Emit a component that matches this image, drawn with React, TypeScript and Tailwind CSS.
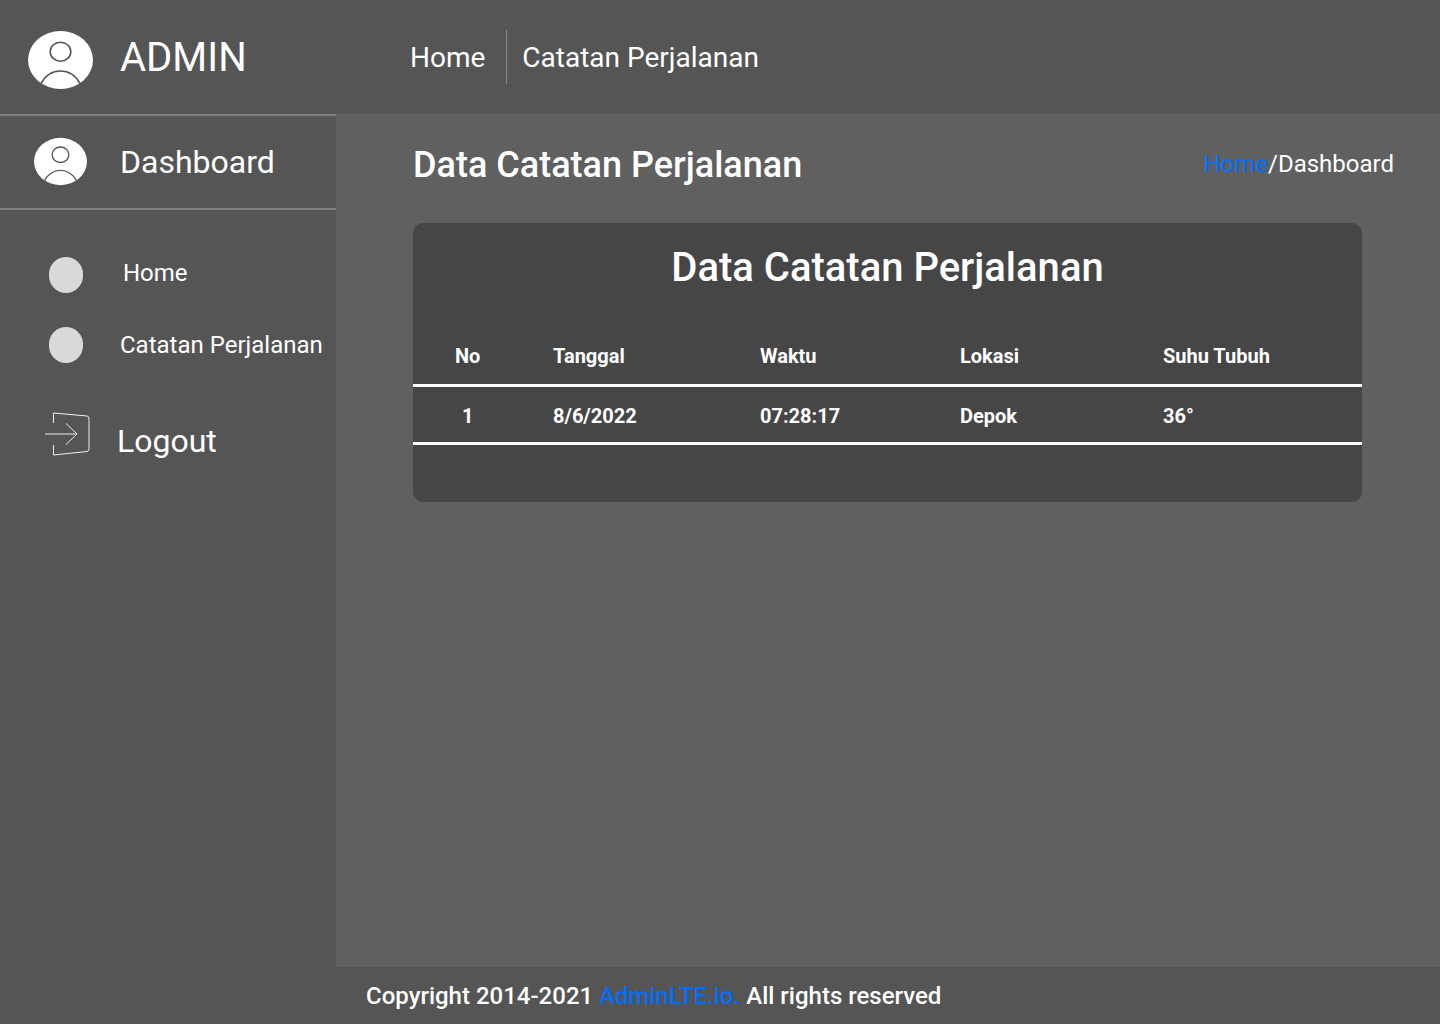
import { ReactNode } from 'react'

function Avatar({ className }: { className: string }) {
  return (
    <svg viewBox="0 0 65 58" className={className}>
      <ellipse cx="32.5" cy="29" rx="32.5" ry="29" fill="#fff" />
      <ellipse cx="32.5" cy="20.7" rx="10.3" ry="9.5" fill="none" stroke="#555" strokeWidth="1.6" />
      <path d="M13 52.5 C 18 43.5, 25 40, 32.5 40 C 40 40, 47 43.5, 52 52.5" fill="none" stroke="#555" strokeWidth="1.6" />
    </svg>
  )
}

function LogoutIcon() {
  return (
    <svg viewBox="0 0 48 46" className="h-[46px] w-[48px] shrink-0" fill="none" stroke="#fff" strokeWidth="0.9">
      <path d="M9.5 12 V2 L43 5 Q45 5.5 45 7.5 V38 Q45 40 43 40.5 L9.5 44 V34" />
      <path d="M1 23 H33 M22 12.5 L33 23 L22 33.5" />
    </svg>
  )
}

function SideLink({ children, labelClass }: { children: ReactNode; labelClass: string }) {
  return (
    <div className="flex h-[36px] items-center">
      <div className="ml-[49px] h-[36px] w-[34px] shrink-0 rounded-full bg-[#d9d9d9]" />
      <span className={labelClass}>{children}</span>
    </div>
  )
}

const columns = [
  { label: 'No', value: '1', cell: 'w-[140px] pl-[42px]', center: true },
  { label: 'Tanggal', value: '8/6/2022', cell: 'w-[207px]', center: false },
  { label: 'Waktu', value: '07:28:17', cell: 'w-[200px]', center: false },
  { label: 'Lokasi', value: 'Depok', cell: 'w-[203px]', center: false },
  { label: 'Suhu Tubuh', value: '36°', cell: 'flex-1', center: false },
]

export default function App() {
  return (
    <div className="flex h-[1024px] w-[1440px] flex-col overflow-hidden bg-[#606060] font-['Roboto',sans-serif] text-white">
      <header className="flex h-[114px] shrink-0 items-center bg-[#555555]">
        <div className="flex w-[410px] shrink-0 items-center pl-[28px]">
          <Avatar className="mt-[6px] h-[58px] w-[65px] shrink-0" />
          <span className="ml-[27px] mt-[2px] text-[40px] leading-none">ADMIN</span>
        </div>
        <span className="mt-[2px] text-[28px] leading-none">Home</span>
        <div className="ml-[21px] h-[54px] w-px bg-[#8a8a8a]" />
        <span className="ml-[15px] mt-[2px] text-[28px] leading-none">Catatan Perjalanan</span>
      </header>

      <div className="flex min-h-0 flex-1">
        <aside className="flex w-[336px] shrink-0 flex-col bg-[#555555]">
          <div className="flex h-[96px] items-center border-y-2 border-[#7f7f7f] pl-[34px]">
            <Avatar className="mb-[2px] h-[49px] w-[53px] shrink-0" />
            <span className="ml-[33px] text-[32px] leading-none">Dashboard</span>
          </div>
          <div className="mt-[47px]">
            <SideLink labelClass="mb-[4px] ml-[40px] text-[24px] leading-none">Home</SideLink>
          </div>
          <div className="mt-[34px]">
            <SideLink labelClass="ml-[37px] text-[24px] leading-none">Catatan Perjalanan</SideLink>
          </div>
          <div className="mt-[48px] flex items-start pl-[44px]">
            <LogoutIcon />
            <span className="ml-[25px] mt-[14px] text-[32px] leading-none">Logout</span>
          </div>
        </aside>

        <div className="flex min-w-0 flex-1 flex-col">
          <main className="flex-1 pl-[77px]">
            <div className="flex h-[109px] items-start justify-between pr-[46px]">
              <h1 className="mt-[33px] text-[36px] font-medium leading-none">Data Catatan Perjalanan</h1>
              <div className="mt-[38px] text-[24px] leading-none">
                <span className="text-[#006eff]">Home</span>/Dashboard
              </div>
            </div>
            <section className="h-[279px] w-[949px] rounded-[10px] bg-[#464646]">
              <h2 className="pt-[21px] text-center text-[40px] font-medium leading-[47px]">Data Catatan Perjalanan</h2>
              <div className="mt-[42px] flex h-[54px] items-start border-b-[3px] border-white pt-[8px] text-[20px] font-bold">
                {columns.map(c => (
                  <div key={c.label} className={c.cell}>{c.label}</div>
                ))}
              </div>
              <div className="flex h-[58px] items-center border-b-[3px] border-white pt-[3px] text-[20px] font-bold">
                {columns.map(c => (
                  <div key={c.label} className={c.cell}>
                    {c.center ? <span className="ml-[7px]">{c.value}</span> : c.value}
                  </div>
                ))}
              </div>
            </section>
          </main>
          <footer className="flex h-[57px] shrink-0 items-center bg-[#555555] pl-[30px] text-[24px] font-medium">
            <span>Copyright 2014-2021&nbsp;</span>
            <span className="text-[#006eff]">AdminLTE.io.</span>
            <span>&nbsp;All rights reserved</span>
          </footer>
        </div>
      </div>
    </div>
  )
}
